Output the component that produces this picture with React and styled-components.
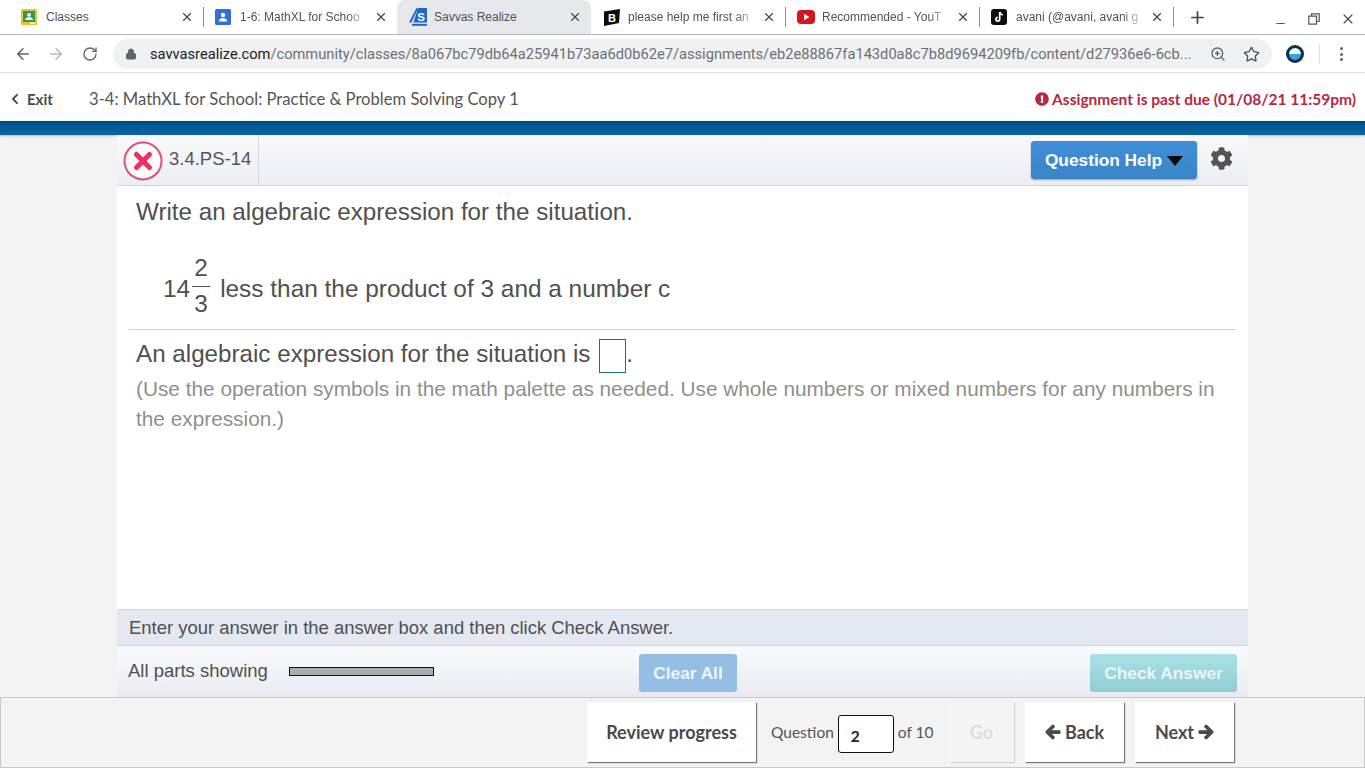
import React from "react";
import styled, { createGlobalStyle } from "styled-components";
import { ArrowLeft, ArrowRight, RotateCw, Lock, ZoomIn, Star, X, Plus, Minus } from "lucide-react";
import { FaArrowLeft, FaArrowRight, FaCog, FaExclamationCircle, FaChevronLeft } from "react-icons/fa";

const GlobalStyle = createGlobalStyle`
  html, body {
    margin: 0;
    padding: 0;
    height: 100%;
    overflow: hidden;
    background: #f3f3f3;
    font-family: "Liberation Sans", Arial, sans-serif;
  }
  * { box-sizing: border-box; }
`;

const tabs = [
  { title: "Classes", icon: "classroom", sep: true },
  { title: "1-6: MathXL for Schoo", icon: "person", fade: true },
  { title: "Savvas Realize", icon: "savvas", active: true },
  { title: "please help me first an", icon: "brainly", fade: true, sep: true },
  { title: "Recommended - YouT", icon: "youtube", fade: true, sep: true },
  { title: "avani (@avani, avani g", icon: "tiktok", fade: true, sep: true },
];

function Favicon({ kind }) {
  if (kind === "classroom") {
    return (
      <svg width="16" height="16" viewBox="0 0 16 16">
        <rect width="16" height="16" rx="1" fill="#eec22e" />
        <rect x="2" y="2" width="12" height="11" fill="#2f9a58" />
        <circle cx="8" cy="5.8" r="1.9" fill="#fff" />
        <path d="M4 11c.5-2.200 2.200-2.700 4-2.700s3.500.5 4 2.700z" fill="#fff" />
        <rect x="9" y="13.500" width="5" height="1.500" fill="#fff" />
      </svg>
    );
  }
  if (kind === "person") {
    return (
      <svg width="16" height="16" viewBox="0 0 16 16">
        <rect width="16" height="16" rx="1.5" fill="#2f6fd6" />
        <circle cx="8" cy="6" r="2.2" fill="#fff" />
        <path d="M3.8 12.5c.3-2.6 2.200-3.400 4.200-3.400s3.900.8 4.200 3.400z" fill="#fff" />
      </svg>
    );
  }
  if (kind === "savvas") {
    return (
      <svg width="18" height="18" viewBox="0 0 18 18">
        <path d="M7.500 0 0 14.500h2.500L8.500 1.500V0z" fill="#1f66c9" />
        <path d="M9 0h9v14.500H4.500z" fill="#1f66c9" />
        <rect x="3" y="15.800" width="15" height="2" fill="#1f66c9" />
        <text x="8.300" y="13" fontSize="11.500" fontWeight="700" fontFamily="Liberation Sans" fill="#fff">S</text>
      </svg>
    );
  }
  if (kind === "brainly") {
    return (
      <svg width="18" height="17" viewBox="0 0 18 17">
        <path d="M1 2.500 17 0l-1 14L1 17z" fill="#0d0d0d" />
        <text x="5" y="13" fontSize="11" fontWeight="700" fontFamily="Liberation Sans" fill="#fff">B</text>
      </svg>
    );
  }
  if (kind === "youtube") {
    return (
      <svg width="18" height="14" viewBox="0 0 18 14">
        <rect width="18" height="14" rx="4" fill="#d8151d" />
        <path d="M7 3.800v6.400L12.400 7z" fill="#fff" />
      </svg>
    );
  }
  return (
    <svg width="16" height="16" viewBox="0 0 16 16">
      <rect width="16" height="16" rx="3" fill="#0c0c0f" />
      <path d="M8.700 3v7.200a1.900 1.900 0 1 1-1.900-1.900" fill="none" stroke="#fff" strokeWidth="1.700" />
      <path d="M8.700 3c.3 1.600 1.400 2.600 3 2.800" fill="none" stroke="#fff" strokeWidth="1.700" />
    </svg>
  );
}

function App() {
  return (
    <Page>
      <GlobalStyle />
      <TabStrip>
        {tabs.map((tab) => (
          <Tab key={tab.title} $active={tab.active} $sep={tab.sep}>
            <TabIcon><Favicon kind={tab.icon} /></TabIcon>
            <TabTitle $fade={tab.fade}>{tab.title}</TabTitle>
            <X size={14} color="#444" strokeWidth={2} />
          </Tab>
        ))}
        <NewTab><Plus size={19} color="#444" strokeWidth={2.2} /></NewTab>
        <WindowControls>
          <MinimizeIcon size={13} color="#555" />
          <RestoreIcon viewBox="0 0 12 12">
            <path d="M3.500 3V.8h7.700v7.700H8.800M.8 3.200h7.700v8H.8z" fill="none" stroke="#555" strokeWidth="1.200" />
          </RestoreIcon>
          <X size={16} color="#444" strokeWidth={1.6} />
        </WindowControls>
      </TabStrip>

      <AddressRow>
        <NavIcon><ArrowLeft size={18} color="#5f6368" strokeWidth={2} /></NavIcon>
        <NavIcon><ArrowRight size={18} color="#b4b6b9" strokeWidth={2} /></NavIcon>
        <NavIcon><RotateCw size={16} color="#5f6368" strokeWidth={2} /></NavIcon>
        <Omnibox>
          <Lock size={12} color="#5f6368" fill="#5f6368" />
          <Url>
            <b>savvasrealize.com</b>/community/classes/8a067bc79db64a25941b73aa6d0b62e7/assignments/eb2e88867fa143d0a8c7b8d9694209fb/content/d27936e6-6cb...
          </Url>
          <ZoomIn size={16} color="#5f6368" />
          <StarIcon size={17} color="#4a4d51" strokeWidth={1.8} />
        </Omnibox>
        <ProfileDot />
        <ToolbarSep />
        <Dots><i /><i /><i /></Dots>
      </AddressRow>

      <AppHeader>
        <ExitLink><FaChevronLeft size={12} /> Exit</ExitLink>
        <AssignmentTitle>3-4: MathXL for School: Practice &amp; Problem Solving Copy 1</AssignmentTitle>
        <PastDue><FaExclamationCircle size={14} /> Assignment is past due (01/08/21 11:59pm)</PastDue>
      </AppHeader>
      <BlueBar />

      <Content>
        <Panel>
          <PanelTop>
            <QuestionId>
              <WrongBadge>
                <svg width="40" height="40" viewBox="0 0 40 40">
                  <circle cx="20" cy="20" r="18.500" fill="#fbfbfc" stroke="#d9527a" strokeWidth="2" />
                  <path d="M13.500 13.500l13 13M26.500 13.500l-13 13" stroke="#ee2f5f" strokeWidth="5" strokeLinecap="round" />
                </svg>
              </WrongBadge>
              3.4.PS-14
            </QuestionId>
            <HelpTools>
              <HelpButton>Question Help <Caret /></HelpButton>
              <FaCog size={23} color="#555" />
            </HelpTools>
          </PanelTop>

          <QuestionBody>
            <Prompt>Write an algebraic expression for the situation.</Prompt>
            <Situation>
              14
              <Fraction><span>2</span><span>3</span></Fraction>
              <SituationText>less than the product of 3 and a number c</SituationText>
            </Situation>
          </QuestionBody>

          <AnswerArea>
            <AnswerLine>
              An algebraic expression for the situation is <AnswerBox />.
            </AnswerLine>
            <Hint>
              (Use the operation symbols in the math palette as needed. Use whole numbers or mixed numbers for any numbers in the expression.)
            </Hint>
          </AnswerArea>

          <Instruction>Enter your answer in the answer box and then click Check Answer.</Instruction>
          <ActionRow>
            <PartsLabel>All parts showing</PartsLabel>
            <PartsBar />
            <ClearButton>Clear All</ClearButton>
            <CheckButton>Check Answer</CheckButton>
          </ActionRow>
        </Panel>
      </Content>

      <BottomNav>
        <NavButton $width={169}>Review progress</NavButton>
        <QuestionPicker>
          Question <PickerInput>2</PickerInput> of 10
        </QuestionPicker>
        <NavButton $width={65} $disabled>Go</NavButton>
        <NavButton $width={99}><FaArrowLeft size={16} /> Back</NavButton>
        <NavButton $width={99}>Next <FaArrowRight size={16} /></NavButton>
      </BottomNav>
    </Page>
  );
}

const Page = styled.div`
  height: 768px;
  display: flex;
  flex-direction: column;
  overflow: hidden;
`;

const TabStrip = styled.div`
  height: 35px;
  flex: none;
  display: flex;
  align-items: stretch;
  padding-left: 9px;
  background: #fff;
  border-bottom: 1px solid #b4b6b8;
`;

const Tab = styled.div`
  position: relative;
  width: 194px;
  display: flex;
  align-items: center;
  justify-content: space-between;
  padding: 0 9px 0 12px;
  font-size: 12px;
  color: #505356;
  background: ${(p) => (p.$active ? "#e6e8eb" : "transparent")};
  border-radius: ${(p) => (p.$active ? "8px 8px 0 0" : "0")};
  &::after {
    content: "";
    display: ${(p) => (p.$sep ? "block" : "none")};
    position: absolute;
    right: -1px;
    top: 7px;
    height: 20px;
    width: 1px;
    background: #8f9193;
  }
`;

const TabIcon = styled.span`
  width: 25px;
  flex: none;
  display: flex;
  align-items: center;
`;

const TabTitle = styled.span`
  flex: 1;
  min-width: 0;
  white-space: nowrap;
  margin-right: 4px;
  ${(p) =>
    p.$fade &&
    "-webkit-mask-image: linear-gradient(to right, #000 82%, transparent 100%); mask-image: linear-gradient(to right, #000 82%, transparent 100%);"}
`;

const NewTab = styled.div`
  width: 48px;
  display: flex;
  align-items: center;
  justify-content: center;
`;

const WindowControls = styled.div`
  margin-left: auto;
  width: 102px;
  padding: 3px 9px 0 11px;
  display: flex;
  align-items: center;
  justify-content: space-between;
`;

const MinimizeIcon = styled(Minus)`
  margin-top: 9px;
`;

const RestoreIcon = styled.svg`
  width: 12px;
  height: 12px;
`;

const AddressRow = styled.div`
  height: 38px;
  flex: none;
  display: flex;
  align-items: center;
  padding: 1px 22px 0 6px;
  background: #fff;
  border-bottom: 1px solid #e2e2e2;
`;

const NavIcon = styled.div`
  width: 33.500px;
  display: flex;
  justify-content: center;
`;

const Omnibox = styled.div`
  width: 1159px;
  height: 30px;
  margin-left: 6.500px;
  padding: 0 12px 0 12px;
  display: flex;
  align-items: center;
  gap: 13px;
  border-radius: 15px;
  background: #f0f1f3;
`;

const Url = styled.div`
  flex: 1;
  min-width: 0;
  white-space: nowrap;
  overflow: hidden;
  font-family: "Roboto", "Liberation Sans", sans-serif;
  font-size: 14.660px;
  color: #6d7073;
  b {
    font-weight: 400;
    color: #202124;
  }
`;

const StarIcon = styled(Star)`
  margin-left: 4px;
`;

const ProfileDot = styled.div`
  width: 18px;
  height: 18px;
  margin-left: 14px;
  border-radius: 50%;
  border: 3px solid #0c2f4e;
  background: linear-gradient(#f0f6fa 50%, #3fa0dc 50%);
`;

const ToolbarSep = styled.div`
  width: 1px;
  height: 20px;
  margin-left: 15px;
  background: #e0e0e0;
`;

const Dots = styled.div`
  margin-left: auto;
  display: flex;
  flex-direction: column;
  gap: 2.500px;
  i {
    width: 3px;
    height: 3px;
    border-radius: 50%;
    background: #5f6368;
  }
`;

const AppHeader = styled.div`
  height: 48px;
  flex: none;
  display: flex;
  align-items: center;
  padding: 3px 9px 0 9px;
  background: #fff;
  font-family: "Lato", "Open Sans", sans-serif;
`;

const ExitLink = styled.div`
  width: 80px;
  font-size: 15px;
  font-weight: 700;
  color: #4a4a4a;
  display: flex;
  align-items: center;
  gap: 6px;
`;

const AssignmentTitle = styled.div`
  font-size: 16.620px;
  color: #555;
`;

const PastDue = styled.div`
  margin-left: auto;
  display: flex;
  align-items: center;
  gap: 3px;
  font-size: 15.500px;
  font-weight: 700;
  color: #b5283f;
`;

const BlueBar = styled.div`
  height: 14px;
  flex: none;
  background: linear-gradient(#00477d 0, #005a98 35%, #0b64a3 100%);
  box-shadow: 0 1px 2px rgba(0, 0, 0, 0.25);
`;

const Content = styled.div`
  flex: 1;
  min-height: 0;
  padding: 0 117px;
`;

const Panel = styled.div`
  width: 1131px;
  height: 100%;
  display: flex;
  flex-direction: column;
  background: #fff;
`;

const PanelTop = styled.div`
  height: 51px;
  flex: none;
  display: flex;
  align-items: stretch;
  justify-content: space-between;
  background: linear-gradient(#f9f9fb, #eceef3);
  border-bottom: 1px solid #d3d5d9;
`;

const QuestionId = styled.div`
  width: 142px;
  display: flex;
  align-items: center;
  padding: 0 0 2px 6px;
  gap: 6px;
  font-size: 18.500px;
  color: #555;
  border-right: 1px solid #d6d8dc;
`;

const WrongBadge = styled.span`
  display: flex;
  width: 40px;
  height: 40px;
  margin-top: 3px;
`;

const HelpTools = styled.div`
  display: flex;
  align-items: center;
  gap: 13px;
  padding: 0 15px 3px 0;
`;

const HelpButton = styled.div`
  width: 166px;
  height: 38px;
  margin-top: 2px;
  padding-top: 1px;
  display: flex;
  align-items: center;
  justify-content: center;
  gap: 5px;
  border-radius: 3px;
  background: linear-gradient(#3f8fd8, #3a84c8);
  box-shadow: 0 1px 2px rgba(0, 0, 0, 0.35);
  color: #fff;
  font-size: 17.300px;
  font-weight: 700;
`;

const Caret = styled.span`
  width: 0;
  height: 0;
  margin-top: 2px;
  border-left: 8px solid transparent;
  border-right: 8px solid transparent;
  border-top: 10px solid #0a0a0a;
`;

const QuestionBody = styled.div`
  margin: 0 12px;
  padding: 11px 7px 0;
  height: 144px;
  flex: none;
  border-bottom: 1px solid #d5d5d5;
  color: #505050;
`;

const Prompt = styled.div`
  font-size: 24.200px;
  line-height: 30px;
`;

const Situation = styled.div`
  margin-top: 29px;
  padding-left: 27px;
  display: flex;
  align-items: center;
  font-size: 24.400px;
`;

const Fraction = styled.span`
  display: inline-flex;
  flex-direction: column;
  align-items: center;
  width: 18px;
  margin: -6px 0 0 2px;
  span {
    line-height: 34px;
  }
  span:first-child {
    border-bottom: 1px solid #505050;
    width: 100%;
    text-align: center;
    line-height: 36px;
  }
`;

const SituationText = styled.span`
  margin-left: 10px;
`;

const AnswerArea = styled.div`
  flex: 1;
  min-height: 0;
  padding: 8px 19px 0;
`;

const AnswerLine = styled.div`
  font-size: 24.200px;
  line-height: 32px;
  color: #505050;
`;

const AnswerBox = styled.span`
  display: inline-block;
  width: 27px;
  height: 34px;
  margin-left: 2px;
  vertical-align: -11px;
  border: 1px solid #1d6b85;
`;

const Hint = styled.div`
  margin-top: 1px;
  font-size: 20.800px;
  line-height: 30px;
  color: #8f8f8f;
`;

const Instruction = styled.div`
  height: 37px;
  flex: none;
  padding: 0 12px;
  display: flex;
  align-items: center;
  font-size: 18.460px;
  color: #505050;
  background: #e4e8f1;
  border-top: 1px solid #d5d7dc;
  border-bottom: 1px solid #d5d7dc;
`;

const ActionRow = styled.div`
  height: 51px;
  flex: none;
  display: flex;
  align-items: center;
  padding: 0 11px;
  background: linear-gradient(#fafbfd, #e9ebf1);
`;

const PartsLabel = styled.div`
  font-size: 18.500px;
  color: #505050;
  margin-bottom: 2px;
`;

const PartsBar = styled.div`
  width: 145px;
  height: 9px;
  margin: 0 auto 0 21px;
  background: #adadad;
  border: 1px solid #111;
`;

const ClearButton = styled.div`
  width: 98px;
  height: 38px;
  margin: 3px 353px 0 0;
  display: flex;
  align-items: center;
  justify-content: center;
  border-radius: 3px;
  background: #95bee4;
  color: #eef5fb;
  font-size: 17.300px;
  font-weight: 700;
`;

const CheckButton = styled.div`
  width: 147px;
  height: 38px;
  margin-top: 3px;
  display: flex;
  align-items: center;
  justify-content: center;
  border-radius: 3px;
  background: linear-gradient(#a8e2e6, #90cdd3);
  color: #e8f6f7;
  font-size: 17.300px;
  font-weight: 700;
`;

const BottomNav = styled.div`
  height: 71px;
  flex: none;
  display: flex;
  align-items: flex-start;
  padding: 4px 0 0 586px;
  background: #f3f3f3;
  border: 1px solid #c9c9c9;
  font-family: "Lato", "Open Sans", sans-serif;
`;

const NavButton = styled.div`
  width: ${(p) => p.$width}px;
  height: 60px;
  margin-right: 11px;
  display: flex;
  align-items: center;
  justify-content: center;
  gap: 4px;
  background: ${(p) => (p.$disabled ? "#f5f5f5" : "#fff")};
  color: ${(p) => (p.$disabled ? "#dfdfdf" : "#4a4a4a")};
  font-size: 18px;
  font-weight: 700;
  box-shadow: 1px 1px 1px ${(p) => (p.$disabled ? "#d5d5d5" : "#777")};
  svg {
    stroke: currentColor;
    stroke-width: 40;
  }
`;

const QuestionPicker = styled.div`
  height: 60px;
  width: 178px;
  margin-left: 4px;
  display: flex;
  align-items: center;
  gap: 4px;
  font-size: 15.500px;
  color: #555;
`;

const PickerInput = styled.span`
  width: 56px;
  height: 38px;
  margin-top: 4px;
  padding: 3px 0 0 12px;
  display: flex;
  align-items: center;
  background: #fff;
  border: 1.500px solid #111;
  border-radius: 3px;
  color: #222;
  font-weight: 700;
`;

export default App;
